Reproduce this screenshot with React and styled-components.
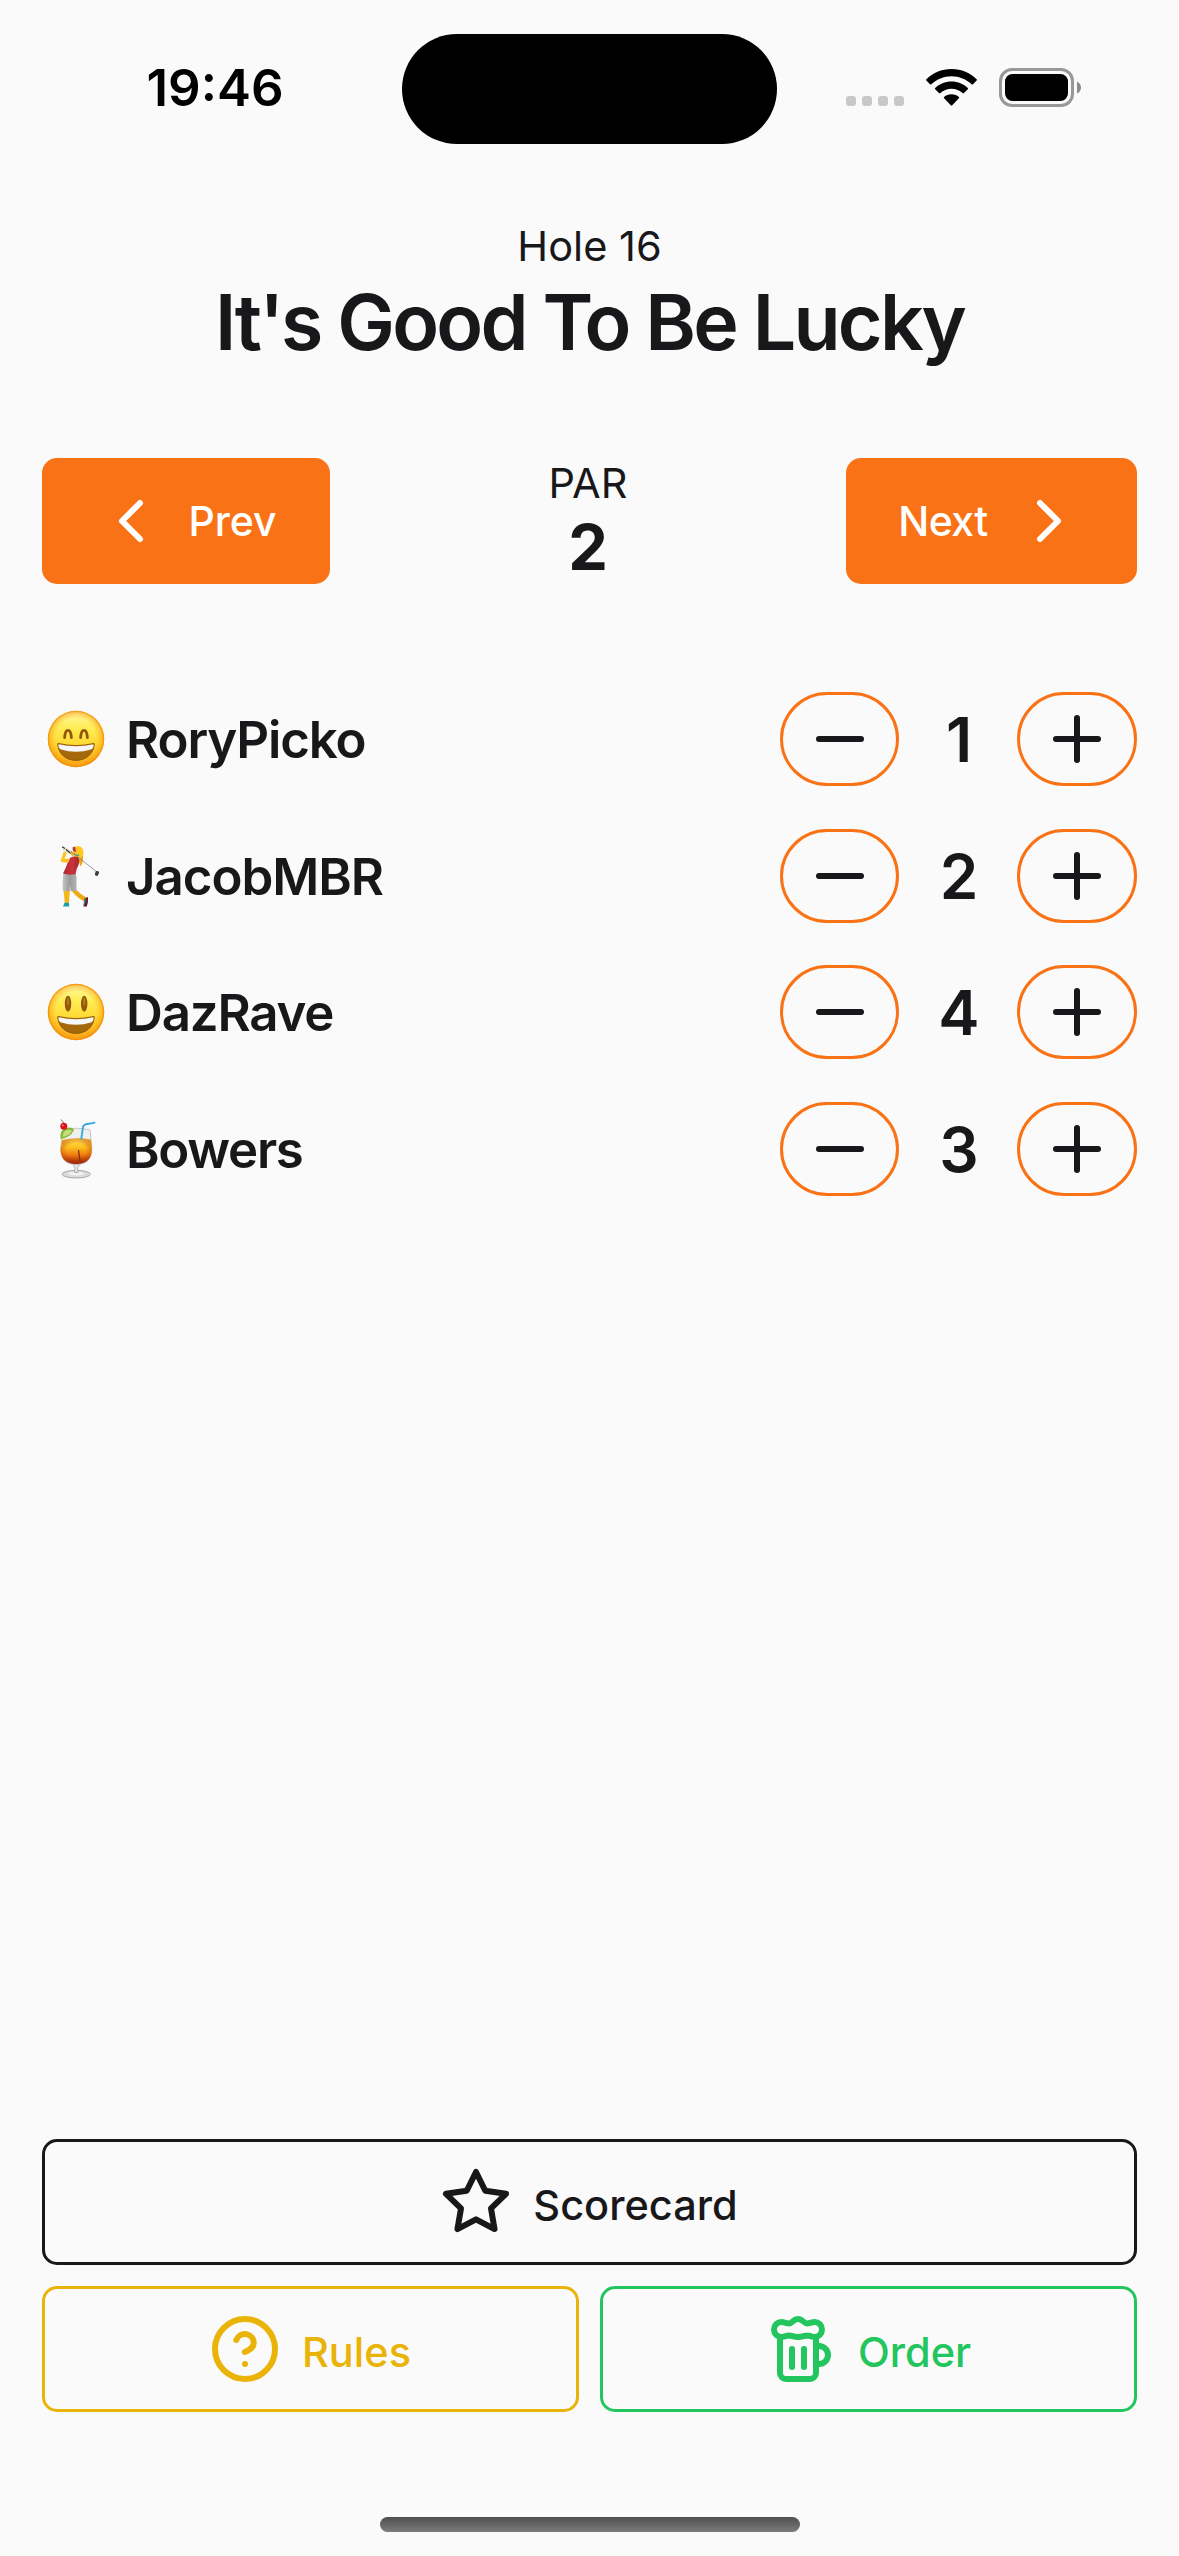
import React, { useState } from "react"
import styled, { createGlobalStyle } from "styled-components"
import {
	Beer,
	ChevronLeft,
	ChevronRight,
	CircleQuestionMark,
	Minus,
	Plus,
} from "lucide-react"

const initialPlayers = [
	{ id: 1, name: "RoryPicko", avatar: "smile", score: 1, spacing: "-1.15px" },
	{ id: 2, name: "JacobMBR", avatar: "golfer", score: 2, spacing: "-1.05px" },
	{ id: 3, name: "DazRave", avatar: "grin", score: 4, spacing: "-1.2px" },
	{ id: 4, name: "Bowers", avatar: "cocktail", score: 3, spacing: "-1.3px" },
]

function StarIcon() {
	return (
		<svg
			width="72"
			height="72"
			viewBox="0 0 24 24"
			fill="none"
			stroke="currentColor"
			strokeWidth="2"
			strokeLinecap="round"
			strokeLinejoin="round"
		>
			<polygon points="12 2 15.09 8.26 22 9.27 17 14.14 18.18 21.02 12 17.77 5.82 21.02 7 14.14 2 9.27 8.91 8.26 12 2" />
		</svg>
	)
}

function Face({ id, children }) {
	return (
		<svg width="68" height="68" viewBox="0 0 68 68">
			<defs>
				<linearGradient id={id + "-skin"} x1="0" y1="0" x2="0" y2="1">
					<stop offset="0" stopColor="#fff9a8" />
					<stop offset="0.3" stopColor="#ffee55" />
					<stop offset="0.65" stopColor="#ffd42e" />
					<stop offset="1" stopColor="#fba81b" />
				</linearGradient>
				<radialGradient id={id + "-edge"}>
					<stop offset="0.72" stopColor="#f79009" stopOpacity="0" />
					<stop offset="0.92" stopColor="#f79009" stopOpacity="0.4" />
					<stop offset="1" stopColor="#f08300" stopOpacity="0.95" />
				</radialGradient>
			</defs>
			<circle cx="34" cy="34" r="28.2" fill={`url(#${id}-skin)`} />
			<circle cx="34" cy="34" r="28.2" fill={`url(#${id}-edge)`} />
			{children}
			{/* mouth */}
			<path
				d="M15.6 39.2Q15.5 38.2 16.8 38.5Q34 42.6 51.2 38.5Q52.5 38.2 52.4 39.2C51.5 49 44 55.4 34 55.4S16.5 49 15.6 39.2Z"
				fill="#a5690c"
				stroke="#8a5205"
				strokeWidth="0.8"
			/>
			<path
				d="M16.6 39.3Q34 43.4 51.4 39.3Q52 42.8 49.6 44.2Q34 49.4 18.4 44.2Q16 42.8 16.6 39.3Z"
				fill="#f7f7f9"
			/>
		</svg>
	)
}

function Smile() {
	return (
		<Face id="smile">
			<g fill="none" stroke="#91560b" strokeWidth="2.8" strokeLinecap="round">
				<path d="M22.6 32.6C23 27.6 24.5 25.4 26 25.4S29 27.6 29.4 32.6" />
				<path d="M38.6 32.6C39 27.6 40.5 25.4 42 25.4S45 27.6 45.4 32.6" />
			</g>
		</Face>
	)
}

function Grin() {
	return (
		<Face id="grin">
			<g fill="#92580a">
				<ellipse cx="26" cy="25.7" rx="3.2" ry="8" />
				<ellipse cx="42.2" cy="25.7" rx="3.2" ry="8" />
			</g>
			<g fill="#b07a20">
				<ellipse cx="26" cy="23.5" rx="1.2" ry="4" />
				<ellipse cx="42.2" cy="23.5" rx="1.2" ry="4" />
			</g>
		</Face>
	)
}

function Golfer() {
	return (
		<svg width="68" height="68" viewBox="0 0 68 68">
			<defs>
				<linearGradient id="shirt" x1="0" y1="0" x2="1" y2="0">
					<stop offset="0" stopColor="#b02630" />
					<stop offset="0.6" stopColor="#c9343d" />
					<stop offset="1" stopColor="#a52029" />
				</linearGradient>
				<linearGradient id="shorts" x1="0" y1="0" x2="1" y2="0">
					<stop offset="0" stopColor="#c4c4c4" />
					<stop offset="0.5" stopColor="#9b9b9b" />
					<stop offset="1" stopColor="#b3b3b3" />
				</linearGradient>
			</defs>
			{/* ponytail, head and cap */}
			<path d="M37 6Q42 9 41 15Q41.5 20 38.5 24.5Q36.5 20 36 15Z" fill="#eba911" />
			<path d="M31 8Q32 4 36.5 4Q41.5 5 41.5 11Q40 17 35 17Q31 16 31 8Z" fill="#ffc71f" />
			<path d="M30.5 5.5L33 4.5L34 10L31 9Z" fill="#b4333b" />
			<path d="M31.5 11.5Q34 13.5 37 13.5" stroke="#31a6a0" strokeWidth="1.5" fill="none" />
			{/* legs */}
			<path d="M21.5 48H28L26.8 61.5H22.8Z" fill="#f3b61d" />
			<path d="M29 48H34.5Q38 52 45 56L43 60Q34 55 29 48Z" fill="#eeaa16" />
			<path d="M22.5 60.8H27L27.2 64.4H21Z" fill="#17a2ab" />
			<path d="M42.5 56.5L46 55Q46.5 60 44.8 64.5H41.5Z" fill="#6e1c2a" />
			<path d="M42 58L43.8 56L43.4 60L41.5 64.5Z" fill="#1b9aa5" />
			<path d="M21.5 31.5H33.5L34.5 35Q34.6 44 34.5 48.8L28.5 49L28 43L27.5 49H20.8Q20 39 21.5 31.5Z" fill="url(#shorts)" />
			<path d="M28 16Q32 13.5 36.5 15.5Q38 19 36.5 23Q34 27 33.5 32.2Q27 33.4 21 31.5Q24 26 25.5 21Z" fill="url(#shirt)" />
			{/* raised arms */}
			<path d="M22 9L18.5 19Q21 21.5 27 20L27.5 17L22.5 16.5L25.5 10Z" fill="#fdc323" />
			<path d="M20.5 6.5L24.5 5.5L28.5 9L27 11.5L22 10Z" fill="#e8e2cf" />
			<path d="M20 4.8L23 6.5M24 7.5L29 11.5" stroke="#353030" strokeWidth="1.2" />
			<path d="M29 9.5L31 14" stroke="#f3b61d" strokeWidth="2" />
			<path d="M28.5 9L55.5 30.5" stroke="#8e8e8e" strokeWidth="0.9" />
			<path d="M54 29Q57.5 28.5 57 31L55.5 34Q52.5 34 53 31.5Z" fill="#383c43" />
		</svg>
	)
}

function Cocktail() {
	return (
		<svg width="68" height="68" viewBox="0 0 68 68">
			<defs>
				<linearGradient id="juice" x1="0" y1="0" x2="0" y2="1">
					<stop offset="0" stopColor="#ffe05a" />
					<stop offset="0.35" stopColor="#fdc01c" />
					<stop offset="0.65" stopColor="#ee7a11" />
					<stop offset="1" stopColor="#8d1708" />
				</linearGradient>
				<radialGradient id="juiceShade">
					<stop offset="0.6" stopColor="#b9380a" stopOpacity="0" />
					<stop offset="1" stopColor="#b9380a" stopOpacity="0.4" />
				</radialGradient>
			</defs>
			{/* foot and stem */}
			<ellipse cx="34.2" cy="59.2" rx="14.2" ry="3.8" fill="#d9dadb" stroke="#a1a3a5" strokeWidth="0.9" />
			<ellipse cx="34.2" cy="58.6" rx="8" ry="1.8" fill="#f2f2f2" />
			<path d="M31 49.5L33 53L32.4 57.5H36.2L35.6 53L37.6 49.5Z" fill="#e5e5e6" stroke="#9b9b9b" strokeWidth="0.7" />
			{/* glass */}
			<path d="M21 15Q34.5 11.5 48 15L49.8 34Q50 49.4 34.2 49.6Q18.5 49.4 18.6 34Z" fill="#eff0ee" stroke="#b9bab9" strokeWidth="0.8" />
			<path d="M20 25Q34 22 49 24.5L49.8 34Q50 48.6 34.2 49Q18.6 48.6 18.6 34Z" fill="url(#juice)" />
			<path d="M20 25Q34 22 49 24.5L49.8 34Q50 48.6 34.2 49Q18.6 48.6 18.6 34Z" fill="url(#juiceShade)" />
			<path d="M36.5 35L38 46" stroke="#7d2e0a" strokeWidth="1.2" />
			{/* lime and cherry */}
			<path d="M18.5 24Q17.5 15 24 13Q30 11.5 32 15Q28 23 18.5 24Z" fill="#86b92f" />
			<path d="M20.5 22Q21 16 25 15Q29 14 30 16Q27 21 20.5 22Z" fill="#c9dd7d" />
			<path d="M22 10Q22 7 19 4.5" stroke="#8a5643" strokeWidth="0.9" fill="none" />
			<circle cx="21.8" cy="11.3" r="3.5" fill="#d8151c" />
			<circle cx="20.8" cy="10.2" r="1" fill="#ff7c78" />
			<path d="M39.2 24.5L41 12Q41.5 9.8 44 9.3L53.3 7.6" stroke="#3ba7e3" strokeWidth="1.9" fill="none" />
		</svg>
	)
}

const avatars = {
	smile: Smile,
	golfer: Golfer,
	grin: Grin,
	cocktail: Cocktail,
}

function StatusBar() {
	return (
		<StatusRow>
			<Time>19:46</Time>
			<Island />
			<StatusIcons>
				<svg width="58" height="10" viewBox="0 0 58 10" fill="#c8c8c8">
					<rect x="0" width="10" height="10" rx="3" />
					<rect x="16" width="10" height="10" rx="3" />
					<rect x="32" width="10" height="10" rx="3" />
					<rect x="48" width="10" height="10" rx="3" />
				</svg>
				<svg className="wifi" width="51" height="37" viewBox="0 0 51 37">
					<path d="M25.5 0C35.5 0 44.4 3.9 50.6 10.2Q51.3 10.9 50.6 11.6L47 15.2Q46.3 15.9 45.6 15.2C40.4 10.2 33.3 7.2 25.5 7.2S10.6 10.2 5.4 15.2Q4.7 15.9 4 15.2L0.4 11.6Q-0.3 10.9 0.4 10.2C6.6 3.9 15.5 0 25.5 0Z" />
					<path d="M25.5 12.4C31.9 12.4 37.6 14.9 41.8 18.9Q42.5 19.6 41.8 20.3L38 24.1Q37.3 24.8 36.6 24.1C33.7 21.4 29.8 19.8 25.5 19.8S17.3 21.4 14.4 24.1Q13.7 24.8 13 24.1L9.2 20.3Q8.5 19.6 9.2 18.9C13.4 14.9 19.1 12.4 25.5 12.4Z" />
					<path d="M25.5 25.2C28.4 25.2 31 26.2 32.9 27.9Q33.6 28.6 32.9 29.3L26.2 36.3Q25.5 37 24.8 36.3L18.1 29.3Q17.4 28.6 18.1 27.9C20 26.2 22.6 25.2 25.5 25.2Z" />
				</svg>
				<svg className="battery" width="83" height="39" viewBox="0 0 83 39">
					<rect x="1.5" y="1.5" width="72" height="36" rx="11.5" fill="none" stroke="#989898" strokeWidth="3" />
					<rect x="6" y="6" width="63" height="27" rx="7.5" />
					<path d="M78 13.5Q82 15.5 82 19.5T78 25.5Z" fill="#8c8c8c" />
				</svg>
			</StatusIcons>
		</StatusRow>
	)
}

function PlayerRow({ player, changeScore }) {
	const Avatar = avatars[player.avatar]

	return (
		<Row>
			<Avatar />
			<PlayerName $spacing={player.spacing}>{player.name}</PlayerName>
			<RoundButton onClick={() => changeScore(player.id, -1)}>
				<Minus size={72} />
			</RoundButton>
			<Score>{player.score}</Score>
			<RoundButton onClick={() => changeScore(player.id, 1)}>
				<Plus size={72} />
			</RoundButton>
		</Row>
	)
}

function App() {
	const [players, setPlayers] = useState(initialPlayers)

	const changeScore = (id, amount) => {
		setPlayers(
			players.map((player) =>
				player.id === id
					? { ...player, score: Math.max(0, player.score + amount) }
					: player
			)
		)
	}

	return (
		<Screen>
			<GlobalStyle />
			<StatusBar />
			<Header>
				<h2>Hole 16</h2>
				<h1>It's Good To Be Lucky</h1>
			</Header>

			<HoleNav>
				<NavButton $width="288px" $gap="21px">
					<ChevronLeft size={72} />
					<span>Prev</span>
				</NavButton>
				<Par>
					<span>PAR</span>
					<strong>2</strong>
				</Par>
				<NavButton $width="291px" $gap="25px" $spacing="-0.6px">
					<span>Next</span>
					<ChevronRight size={72} />
				</NavButton>
			</HoleNav>

			<Players>
				{players.map((player) => (
					<PlayerRow key={player.id} player={player} changeScore={changeScore} />
				))}
			</Players>

			<Actions>
				<ActionButton $wide $color="#18181b">
					<StarIcon />
					<span>Scorecard</span>
				</ActionButton>
				<ActionButton $color="#eab308">
					<CircleQuestionMark size={72} />
					<span>Rules</span>
				</ActionButton>
				<ActionButton $color="#22c55e">
					<Beer size={72} />
					<span>Order</span>
				</ActionButton>
			</Actions>
			<HomeIndicator />
		</Screen>
	)
}

export default App

const GlobalStyle = createGlobalStyle`
	* {
		box-sizing: border-box;
	}

	body {
		margin: 0;
		background: #fafafa;
		color: #18181b;
		font-family: Inter, "Liberation Sans", sans-serif;
		-webkit-font-smoothing: antialiased;
	}

	button {
		font-family: inherit;
		cursor: pointer;
	}

	svg {
		display: block;
		flex-shrink: 0;
	}
`

const Screen = styled.div`
	display: flex;
	flex-direction: column;
	width: 1179px;
	height: 2556px;
	overflow: hidden;
`

const StatusRow = styled.div`
	display: grid;
	grid-template-columns: 402px 375px 1fr;
	align-items: center;
	height: 175px;
	color: #000;
`

const Time = styled.div`
	padding-left: 28px;
	text-align: center;
	font-size: 51px;
	font-weight: 600;
	line-height: 60px;
`

const Island = styled.div`
	height: 110px;
	margin-top: 3px;
	border-radius: 55px;
	background: #000;
`

const StatusIcons = styled.div`
	display: flex;
	align-items: flex-end;
	height: 39px;
	padding: 0 0 1px 69px;

	.wifi {
		margin-left: 22px;
	}

	.battery {
		margin: 0 0 -1px 22px;
	}
`

const Header = styled.header`
	padding-top: 41px;
	text-align: center;

	h1,
	h2 {
		margin: 0;
	}

	h2 {
		font-size: 41.5px;
		font-weight: 400;
		line-height: 60px;
	}

	h1 {
		margin-top: 4px;
		font-size: 77px;
		font-weight: 600;
		line-height: 84px;
		letter-spacing: -2.75px;
	}
`

const HoleNav = styled.nav`
	display: flex;
	justify-content: space-between;
	height: 126px;
	margin: 94px 42px 0;
`

const NavButton = styled.button`
	display: flex;
	align-items: center;
	justify-content: center;
	gap: ${(props) => props.$gap};
	width: ${(props) => props.$width};
	border: none;
	border-radius: 15px;
	background: #f97316;
	color: #fff;
	font-size: 41px;
	font-weight: 500;
	line-height: 60px;
	letter-spacing: ${(props) => props.$spacing || "normal"};
`

const Par = styled.div`
	display: flex;
	flex-direction: column;
	align-items: center;
	justify-content: center;
	padding-bottom: 3px;

	span {
		font-size: 41.5px;
		line-height: 54px;
	}

	strong {
		font-size: 63px;
		font-weight: 700;
		line-height: 74px;
	}
`

const Players = styled.div`
	display: flex;
	flex-direction: column;
	gap: 42.67px;
	margin: 108px 42px 0;
`

const Row = styled.div`
	display: grid;
	grid-template-columns: 68px 1fr 119px 118px 120px;
	align-items: center;
	height: 94px;
`

const PlayerName = styled.span`
	padding: 2px 0 0 16px;
	font-size: 51px;
	font-weight: 600;
	line-height: 60px;
	letter-spacing: ${(props) => props.$spacing};
`

const RoundButton = styled.button`
	display: flex;
	align-items: center;
	justify-content: center;
	height: 94px;
	padding: 0;
	border: 3px solid #f97316;
	border-radius: 47px;
	background: transparent;
	color: #18181b;
`

const Score = styled.span`
	padding: 2px 0 0 2px;
	text-align: center;
	font-size: 62px;
	font-weight: 600;
	line-height: 72px;
`

const Actions = styled.div`
	display: grid;
	grid-template-columns: 1fr 1fr;
	gap: 21px;
	margin: auto 42px 105px;
`

const ActionButton = styled.button`
	display: flex;
	align-items: center;
	justify-content: center;
	gap: 21px;
	grid-column: ${(props) => (props.$wide ? "1 / -1" : "auto")};
	height: 126px;
	padding: 0 1px 0 0;
	border: 3px solid ${(props) => props.$color};
	border-radius: 15px;
	background: transparent;
	color: ${(props) => props.$color};
	font-size: 41.5px;
	font-weight: 500;
	line-height: 60px;

	span {
		padding-top: 6px;
	}
`

const HomeIndicator = styled.div`
	width: 420px;
	height: 15px;
	margin: 0 auto 24px;
	border-radius: 8px;
	background: linear-gradient(#4f4f4f, #7c7c7c);
`
